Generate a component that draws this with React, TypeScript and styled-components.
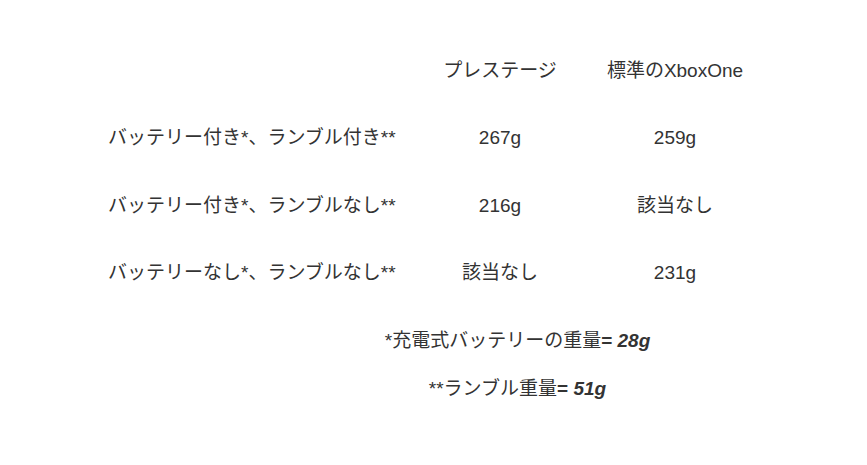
import styled, { createGlobalStyle } from 'styled-components'

const GlobalStyle = createGlobalStyle`
  body {
    margin: 0;
    background: #ffffff;
    color: #333333;
    font-family: "Liberation Sans", "Noto Sans CJK JP", sans-serif;
    font-size: 19px;
  }
`

const Page = styled.div`
  width: 867px;
  height: 465px;
  padding-top: 37px;
  box-sizing: border-box;
`

const Table = styled.div`
  display: grid;
  grid-template-columns: 292px 200px 150px;
  grid-auto-rows: 67.5px;
  padding-left: 108px;
`

const Cell = styled.div<{ $center?: boolean }>`
  display: flex;
  align-items: center;
  justify-content: ${(p) => (p.$center ? 'center' : 'flex-start')};
  line-height: 24px;
  white-space: nowrap;
`

const Notes = styled.div`
  margin-top: 10px;
  padding-left: 168px;
  text-align: center;
`

const Note = styled.p`
  margin: 0;
  line-height: 48px;
  white-space: nowrap;
`

const rows = [
  ['', 'プレステージ', '標準のXboxOne'],
  ['バッテリー付き*、ランブル付き**', '267g', '259g'],
  ['バッテリー付き*、ランブルなし**', '216g', '該当なし'],
  ['バッテリーなし*、ランブルなし**', '該当なし', '231g'],
]

const App = () => {
  return (
    <Page>
      <GlobalStyle />
      <Table>
        {rows.map((row, i) =>
          row.map((text, j) => (
            <Cell key={`${i}-${j}`} $center={j > 0}>
              {text}
            </Cell>
          ))
        )}
      </Table>
      <Notes>
        <Note>
          *充電式バッテリーの重量<b>= <i>28g</i></b>
        </Note>
        <Note>
          **ランブル重量<b>= <i>51g</i></b>
        </Note>
      </Notes>
    </Page>
  )
}

export default App
